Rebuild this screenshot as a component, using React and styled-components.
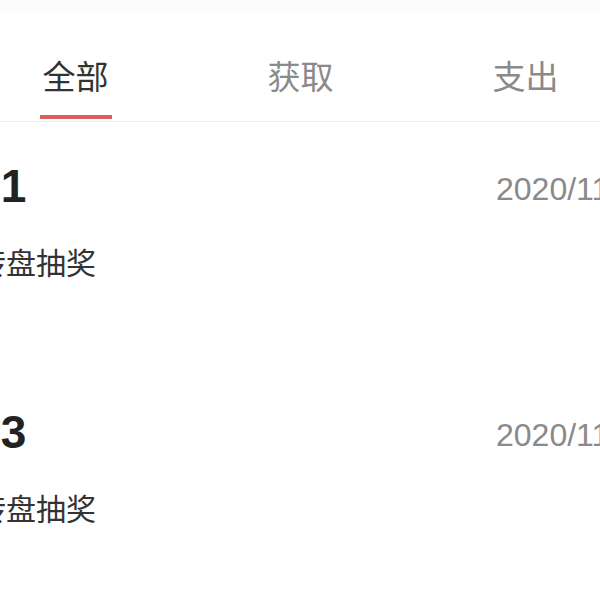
import React from "react";
import styled, { createGlobalStyle } from "styled-components";

const Global = createGlobalStyle`
  html, body { margin: 0; padding: 0; background: #fff; }
  body {
    width: 600px;
    height: 600px;
    overflow: hidden;
    font-family: "Liberation Sans", "Noto Sans CJK SC", sans-serif;
  }
`;

const Page = styled.div`
  width: 600px;
  height: 600px;
  overflow: hidden;
  background: #fff;
`;

const TopBand = styled.div`
  height: 12px;
  background: #fbfbfb;
`;

const TabBar = styled.div`
  height: 109px;
  border-bottom: 1px solid #f0f0f0;
  overflow: hidden;
`;

const TabRow = styled.div`
  display: flex;
  margin-left: -37px;
  padding-top: 43px;
`;

const Tab = styled.div`
  flex: none;
  width: 225px;
  display: flex;
  flex-direction: column;
  align-items: center;
`;

const TabLabel = styled.span`
  font-family: "Noto Sans CJK SC", sans-serif;
  font-size: 33px;
  line-height: 40px;
  color: ${(p) => (p.$active ? "#333" : "#8a8a8a")};
`;

const Underline = styled.div`
  margin-top: 20px;
  width: 72px;
  height: 4px;
  background: ${(p) => (p.$active ? "#dc5f5f" : "transparent")};
`;

const List = styled.div`
  margin-left: -24px;
`;

const Item = styled.div`
  display: grid;
  grid-template-columns: 520px auto;
  grid-template-rows: 50px auto;
  row-gap: 30px;
  padding: 39px 0 87px;
`;

const Amount = styled.div`
  margin-left: -2px;
  font-size: 46px;
  font-weight: 700;
  line-height: 50px;
  color: #222;
`;

const DateText = styled.div`
  font-size: 32px;
  line-height: 50px;
  margin-top: 3px;
  color: #8a8a8a;
  white-space: nowrap;
`;

const Desc = styled.div`
  grid-column: 1 / -1;
  font-family: "Noto Sans CJK SC", sans-serif;
  font-size: 30px;
  line-height: 40px;
  color: #333;
`;

const tabs = [
  { label: "全部", active: true },
  { label: "获取" },
  { label: "支出" },
];

const items = [
  { amount: "+1", date: "2020/11/18 14:32", desc: "转盘抽奖" },
  { amount: "+3", date: "2020/11/18 14:30", desc: "转盘抽奖" },
];

export default function App() {
  return (
    <Page>
      <Global />
      <TopBand />
      <TabBar>
        <TabRow>
          {tabs.map((t) => (
            <Tab key={t.label}>
              <TabLabel $active={t.active}>{t.label}</TabLabel>
              <Underline $active={t.active} />
            </Tab>
          ))}
        </TabRow>
      </TabBar>
      <List>
        {items.map((it, i) => (
          <Item key={i}>
            <Amount>{it.amount}</Amount>
            <DateText>{it.date}</DateText>
            <Desc>{it.desc}</Desc>
          </Item>
        ))}
      </List>
    </Page>
  );
}
